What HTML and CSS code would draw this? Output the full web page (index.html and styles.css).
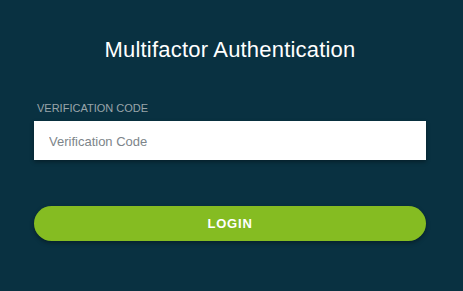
FILE: index.html
```html
<!DOCTYPE html>
<html>
<head>
<meta charset="utf-8">
<link rel="stylesheet" href="styles.css">
</head>
<body>
<div class="page">
  <form class="card">
    <h1 class="title">Multifactor Authentication</h1>
    <label class="label" for="code">VERIFICATION CODE</label>
    <input class="input" id="code" type="text" placeholder="Verification Code" autofocus>
    <button class="btn" type="button">LOGIN</button>
  </form>
</div>
</body>
</html>
```
FILE: styles.css
```css
html, body {
  margin: 0;
  padding: 0;
  background: #093141;
  font-family: "Liberation Sans", Arial, sans-serif;
}
.page {
  width: 463px;
  height: 291px;
  box-sizing: border-box;
  padding-left: 34px;
  display: flex;
}
.card {
  width: 392px;
  margin: 0;
  padding-top: 37px;
  display: flex;
  flex-direction: column;
}
.title {
  margin: 0;
  text-align: center;
  color: #ffffff;
  font-weight: normal;
  font-size: 22px;
  letter-spacing: 0.2px;
  line-height: 26px;
}
.label {
  margin-top: 39px;
  padding-left: 3px;
  color: #9aa5aa;
  font-size: 11px;
  line-height: 13px;
}
.input {
  margin-top: 6px;
  height: 39px;
  box-sizing: border-box;
  border: none;
  outline: none;
  background: #ffffff;
  padding: 1px 0 0 15px;
  font-family: "Liberation Sans", Arial, sans-serif;
  font-size: 13px;
  color: #333;
  caret-color: #000;
  box-shadow: 0 2px 4px rgba(0,0,0,0.35);
}
.input::placeholder {
  color: #7d858a;
}
.btn {
  margin-top: 46px;
  height: 35px;
  border: none;
  border-radius: 18px;
  background: #85bc22;
  color: #ffffff;
  font-family: "Liberation Sans", Arial, sans-serif;
  font-size: 13px;
  font-weight: bold;
  letter-spacing: 0.8px;
  box-shadow: 0 2px 4px rgba(0,0,0,0.35);
}
```
